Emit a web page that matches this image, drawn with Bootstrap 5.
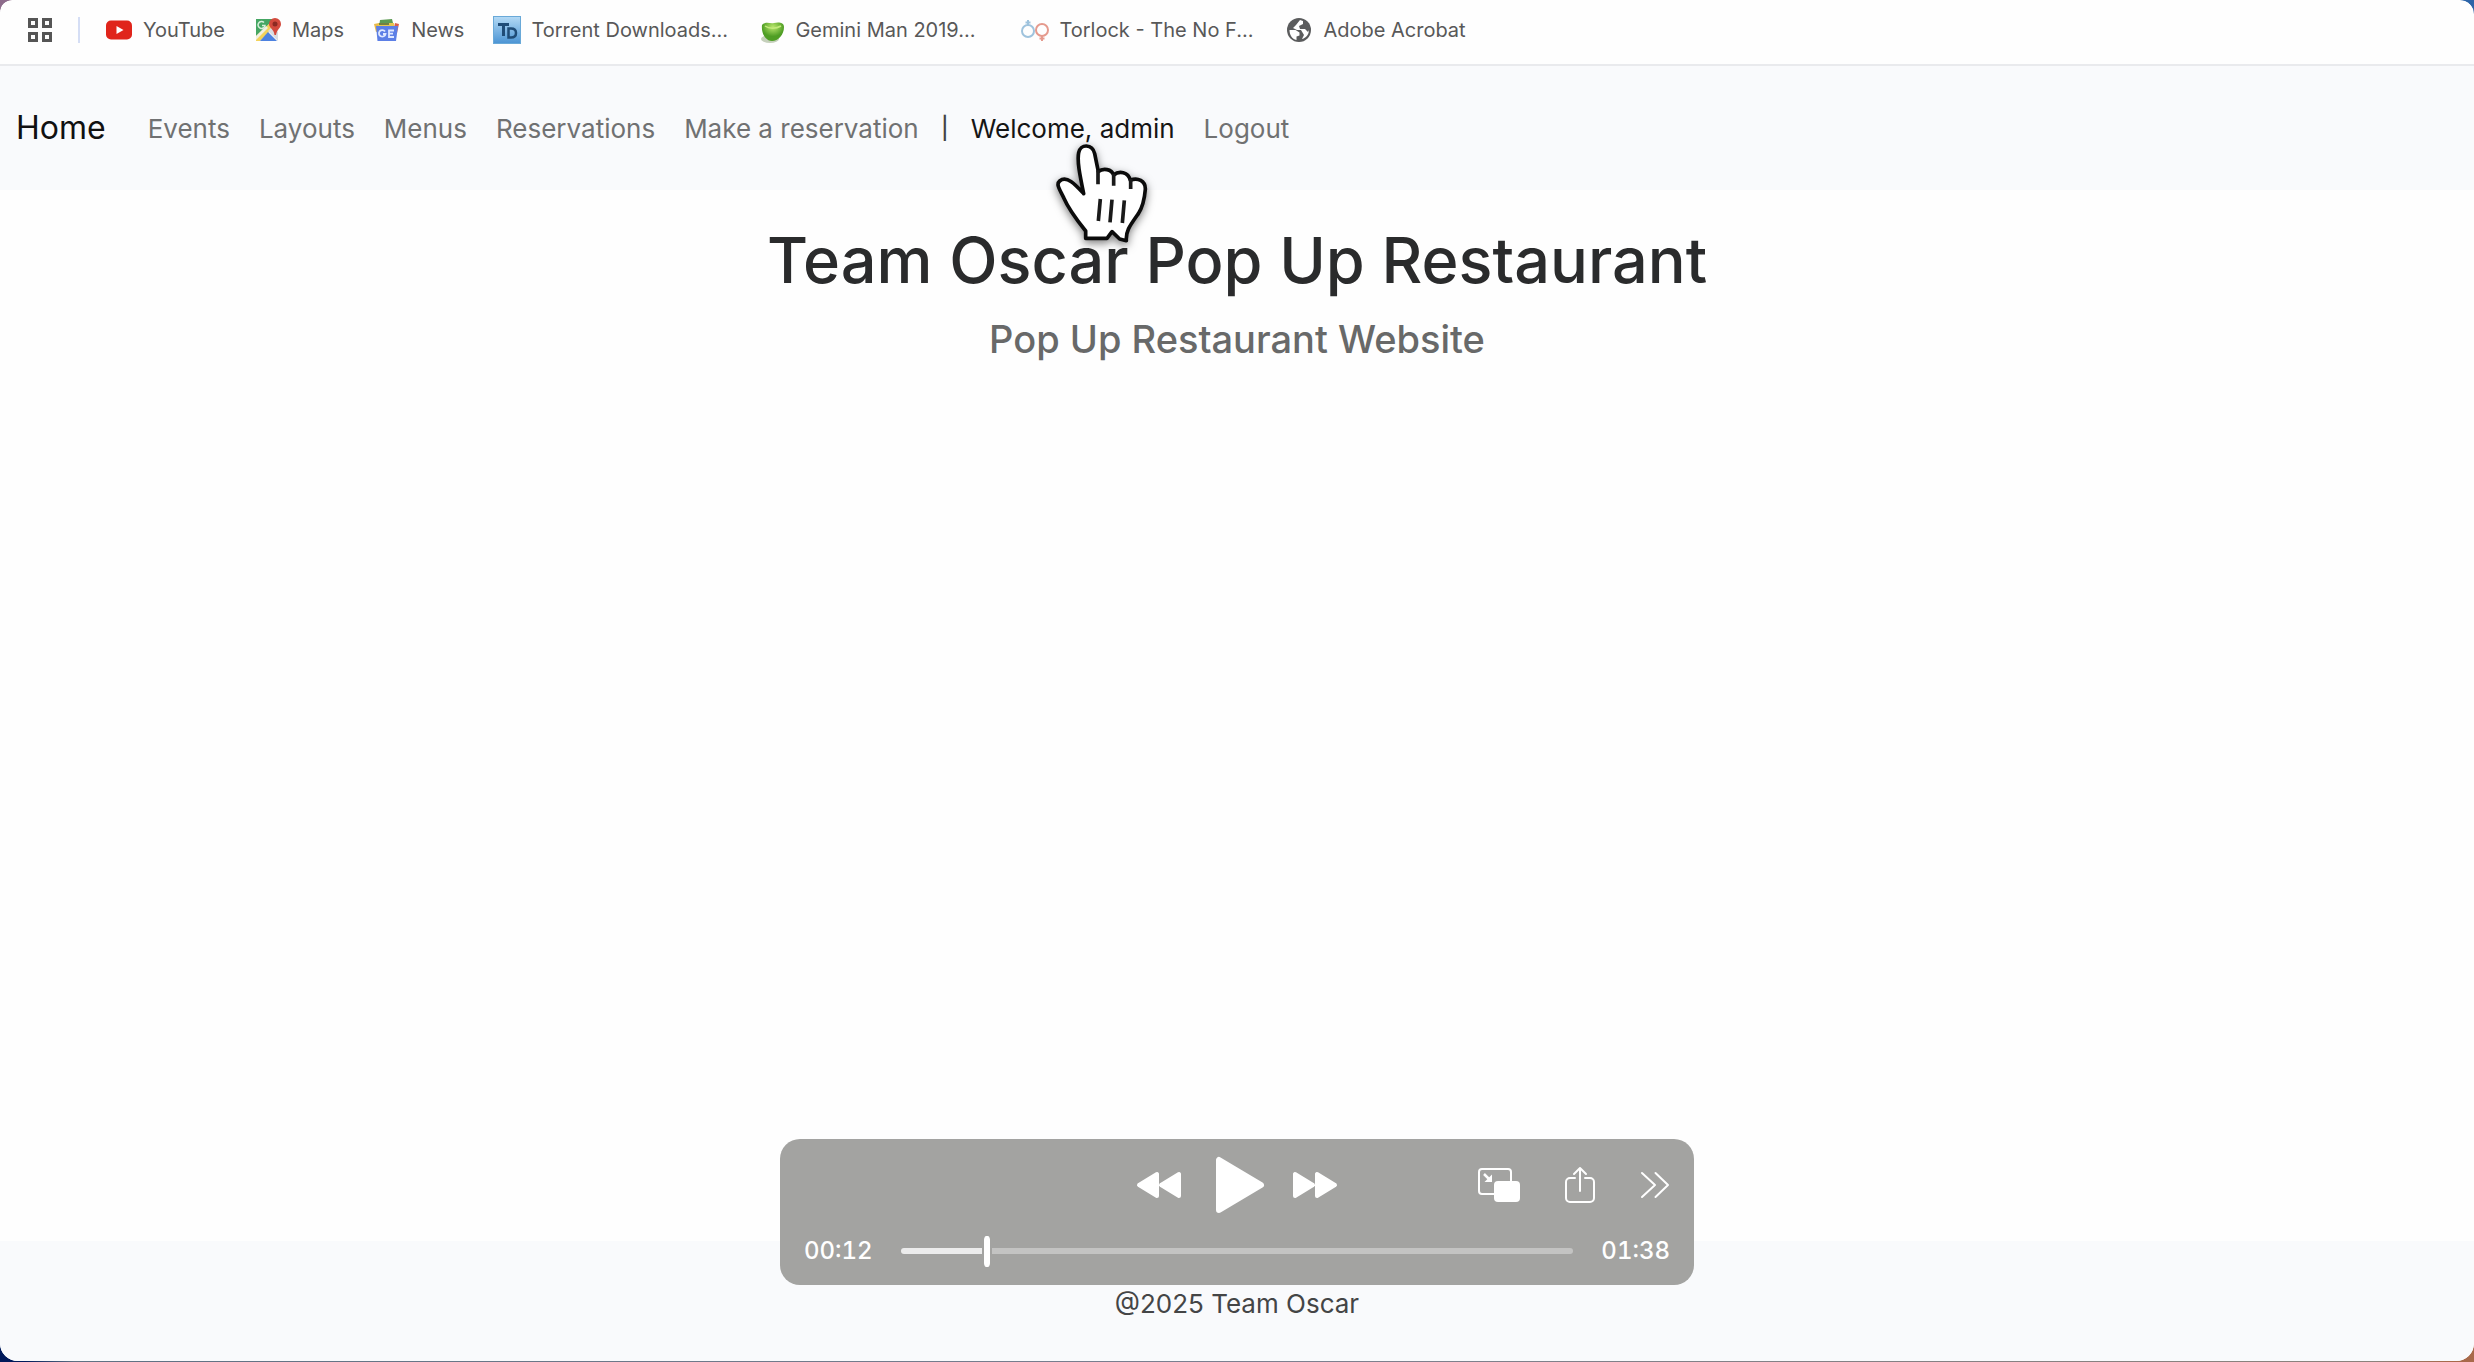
<!DOCTYPE html>
<html lang="en">
<head>
<meta charset="utf-8">
<meta name="viewport" content="width=device-width, initial-scale=1">
<title>Team Oscar Pop Up Restaurant</title>
<link href="https://cdn.jsdelivr.net/npm/bootstrap@5.3.0/dist/css/bootstrap.min.css" rel="stylesheet">
<script src="https://cdn.jsdelivr.net/npm/bootstrap@5.3.0/dist/js/bootstrap.bundle.min.js" defer></script>
<style>
  body {
    font-family: Inter, "Liberation Sans", sans-serif;
    font-size: 26px;
    background:
      linear-gradient(to right, #8d6b8b 50%, #2c64a8 50%) top / 100% 40px no-repeat,
      linear-gradient(to right, #00195a 1%, #5f7183 3%, #7b8090 50%, #8b827c 96%, #a8694a 99%);
  }
  .app-window { min-height: 100vh; border-bottom: 1px solid transparent; border-radius: 12px 14px 18px 18px; background: #fefefe padding-box; }
  .bookmarks { height: 66px; padding: 0 27px 5px; gap: 29px; font-size: 20px; border-bottom: 2px solid #e9eaed; }
  .bookmarks a { color: #585858; gap: 10px; }
  .bookmarks svg { width: 28px; height: 28px; flex: none; }
  .bookmarks .apps-button svg { width: 26px; height: 26px; }
  .bookmarks .divider { width: 2px; height: 26px; margin: 0 -4px; background: #d5def5; }
  .clipped { width: 197px; }
  .site-nav { height: 124px; padding: 0 16px; background: #f9fafc; }
  .site-nav .navbar-brand { font-size: 32px; margin-right: 28px; color: #111; }
  .site-nav .navbar-nav { gap: 1px; }
  .site-nav .navbar-nav .nav-link { padding: 8px 14px; color: #707172; }
  .site-nav .navbar-nav .nav-link.active { color: #151515; }
  .site-nav .pipe { width: 22px; font-size: 22px; font-weight: 500; color: #444; }
  .pointer { left: 96px; top: 40px; width: 100px; z-index: 5; filter: drop-shadow(0 3px 4px rgba(0, 0, 0, .5)); pointer-events: none; }
  .hero { padding-top: 33px; }
  .hero h1 { font-size: 63px; margin-bottom: 17px; color: #2a2b2c; }
  .hero .tagline { font-size: 38px; font-weight: 500; line-height: 46px; color: #686969; }
  .site-footer { height: 120px; padding-top: 4px; border-radius: 0 0 18px 18px; background: #f9fafc; color: #444546; }
  .player { width: 914px; height: 146px; bottom: 76px; padding: 17px 24px 0; border-radius: 20px; background: #a3a3a1; color: #fff; font-size: 24px; font-weight: 500; font-variant-numeric: tabular-nums; }
  .player button { padding: 0; border: 0; background: none; color: inherit; line-height: 0; }
  .player .controls { height: 58px; }
  .player .transport { gap: 30px; }
  .player .extras { gap: 45px; }
  .player .timeline { height: 74px; gap: 28px; }
  .seek { --played: 12%; -webkit-appearance: none; appearance: none; height: 32px; margin: 0; min-width: 0; background: none; }
  .seek::-webkit-slider-runnable-track { height: 6px; border-radius: 3px; background: linear-gradient(to right, #ececec var(--played), #c3c3c2 var(--played)); }
  .seek::-webkit-slider-thumb { -webkit-appearance: none; width: 10px; height: 31px; margin-top: -12px; border: 0 solid #a3a3a1; border-width: 0 2px; border-radius: 4px; background: #fff padding-box; box-shadow: none; }
</style>
</head>
<body>
<div class="app-window d-flex flex-column position-relative">
  <header>
    <div class="bookmarks d-flex align-items-center text-nowrap">
      <button class="apps-button btn p-0 border-0 d-flex" type="button" aria-label="Apps">
        <svg viewBox="0 0 26 26" fill="none" stroke="#555" stroke-width="3"><path d="M2.500 2.500h7v7h-7zM16.500 2.500h7v7h-7zM2.500 16.500h7v7h-7zM16.500 16.500h7v7h-7z"/></svg>
      </button>
      <span class="divider"></span>
      <a href="#" class="d-flex align-items-center text-decoration-none">
        <svg viewBox="0 0 28 28"><rect x="1" y="4.500" width="26" height="19" rx="5" fill="#e0251b"/><path d="M11.500 10v8l7-4z" fill="#fff"/></svg>
        <span>YouTube</span>
      </a>
      <a href="#" class="d-flex align-items-center text-decoration-none">
        <svg viewBox="0 0 28 28">
          <path d="M2 3h18L2 22z" fill="#45a663"/><path d="M2 25V20L17 6l4 4L6 25z" fill="#f3d35b"/><path d="M6 25l8-9 9 9z" fill="#4d82e0"/><path d="M14 15l5-5 5 6v9z" fill="#d9dde2"/>
          <path d="M2 20v4l12-12-2-2z" fill="#f0efe2"/><path d="M10 6.500a3.500 3.500 0 1 0 1 3H8" fill="none" stroke="#d8efdc" stroke-width="1.500"/>
          <path d="M21 2a6 6 0 0 1 6 6c0 4-4 5-5 11h-1.500C20 13 15 12 15 8a6 6 0 0 1 6-6z" fill="#d34a3d"/><circle cx="21" cy="8" r="2.500" fill="#8c2a22"/>
        </svg>
        <span>Maps</span>
      </a>
      <a href="#" class="d-flex align-items-center text-decoration-none">
        <svg viewBox="0 0 28 28">
          <path d="M7 4l12-1 2 8H6z" fill="#5d9b52"/><path d="M1 8l5-1 1 8-4 1z" fill="#e7b94a"/><path d="M22 7l4 1-2 9-4-1z" fill="#d9604c"/><path d="M5 7h16v5H5z" fill="#e8c750"/><path d="M6 8h10" stroke="#4c6b3a" stroke-width="1.500"/>
          <path d="M3 10h22l-2 15H4.500z" fill="#5c7fe6"/><path d="M12 15.500a3.300 3.300 0 1 0 .5 2.500H10M21 14.500h-5v6.500h5M16 17.700h4" fill="none" stroke="#dfe8ff" stroke-width="1.800"/>
        </svg>
        <span>News</span>
      </a>
      <a href="#" class="d-flex align-items-center text-decoration-none">
        <svg viewBox="0 0 28 28">
          <defs><linearGradient id="sky" x2="0" y2="1"><stop stop-color="#b4daf5"/><stop offset="1" stop-color="#4b94d4"/></linearGradient></defs>
          <rect x=".5" y=".5" width="27" height="27" fill="url(#sky)" stroke="#69a9d8"/>
          <path d="M5 8.500h11M10.500 8v12" fill="none" stroke="#1f4c77" stroke-width="3"/><path d="M15.500 12.500h2.500c4 0 5 2 5 4.500s-1 4.500-5 4.500h-2.500z" fill="none" stroke="#1f4c77" stroke-width="2.500"/>
        </svg>
        <span class="clipped">Torrent Downloads...</span>
      </a>
      <a href="#" class="d-flex align-items-center text-decoration-none">
        <svg viewBox="0 0 28 28">
          <defs><radialGradient id="leaf" cx=".5" cy=".25"><stop stop-color="#b9e66c"/><stop offset="1" stop-color="#4f9e24"/></radialGradient></defs>
          <ellipse cx="13" cy="23" rx="9" ry="4" fill="#c5d0bb"/><path d="M5 9c4-4 8-1 12-2s10-1 10 4c0 8-6 14-12 14S4 18 5 9z" fill="url(#leaf)"/><path d="M8 10c4 3 11 3 16 0" fill="none" stroke="#c3ea7c" stroke-width="1.500"/>
        </svg>
        <span class="clipped">Gemini Man 2019...</span>
      </a>
      <a href="#" class="d-flex align-items-center text-decoration-none">
        <svg viewBox="0 0 28 28" fill="none" stroke-width="2"><g stroke="#9fc3dd"><circle cx="7" cy="15" r="6"/><path d="M7 9V4M4.500 6.500h5"/></g><g stroke="#e59a8d"><circle cx="21" cy="14" r="6"/><path d="M21 20v5M18.500 22.500h5"/></g></svg>
        <span class="clipped">Torlock - The No F...</span>
      </a>
      <a href="#" class="d-flex align-items-center text-decoration-none">
        <svg viewBox="0 0 28 28"><circle cx="14" cy="14" r="12" fill="#5b5c5d"/><path d="M4.500 14h6l4 2.500v3l-3 1v3.500C7 23 4.500 19 4.500 14zM11 9l4-5 3 1v3l-4 2 1 3h5l3 3 1-2c0 5-4 8.500-7 9l2-4-3-5h-4l-4-2z" fill="#fff"/></svg>
        <span>Adobe Acrobat</span>
      </a>
    </div>
    <nav class="site-nav navbar navbar-expand flex-nowrap justify-content-start">
      <a class="navbar-brand" href="#">Home</a>
      <ul class="navbar-nav align-items-center text-nowrap">
        <li class="nav-item"><a class="nav-link" href="#">Events</a></li>
        <li class="nav-item"><a class="nav-link" href="#">Layouts</a></li>
        <li class="nav-item"><a class="nav-link" href="#">Menus</a></li>
        <li class="nav-item"><a class="nav-link" href="#">Reservations</a></li>
        <li class="nav-item"><a class="nav-link" href="#">Make a reservation</a></li>
        <li class="pipe text-center">|</li>
        <li class="nav-item position-relative">
          <a class="nav-link active" href="#">Welcome, admin</a>
          <svg class="pointer position-absolute" viewBox="220 420 300 320" aria-hidden="true">
            <path d="M312 578C300 520 292 480 297 455C302 428 338 428 345 458L356 512C370 500 396 504 402 522C418 508 446 512 452 538C474 528 498 540 497 565C494 600 488 620 476 638C450 675 438 690 440 719L420 714L397 692L382 712L318 712L318 690C290 655 265 620 252 590C240 565 228 550 240 540C262 522 288 552 312 578Z" fill="#fff" stroke="#0b0b0b" stroke-width="11" stroke-linejoin="round"/>
            <path d="M355 508v42M402 518v36M453 534v30M362 594l-6 66M397 596l-6 68M434 598l-6 68" fill="none" stroke="#1a1a1a" stroke-width="11"/>
          </svg>
        </li>
        <li class="nav-item"><a class="nav-link" href="#">Logout</a></li>
      </ul>
    </nav>
  </header>

  <main class="hero flex-grow-1 text-center">
    <h1>Team Oscar Pop Up Restaurant</h1>
    <p class="tagline mb-0">Pop Up Restaurant Website</p>
  </main>

  <footer class="site-footer d-flex align-items-center justify-content-center">@2025 Team Oscar</footer>

  <section class="player position-absolute start-50 translate-middle-x" aria-label="Video player">
    <div class="controls d-flex align-items-center justify-content-end position-relative">
      <div class="transport d-flex align-items-center position-absolute start-50 translate-middle-x">
        <button type="button" aria-label="Rewind"><svg width="46" height="28" viewBox="0 0 46 28" fill="#fff" stroke="#fff" stroke-width="4" stroke-linejoin="round"><path d="M21 3v22L3 14zM43 3v22L25 14z"/></svg></button>
        <button type="button" aria-label="Play"><svg class="overflow-visible" width="50" height="56" viewBox="-3 0 50 56" fill="#fff" stroke="#fff" stroke-width="6" stroke-linejoin="round"><path d="M4 3v50l42-25z"/></svg></button>
        <button type="button" aria-label="Fast forward"><svg width="46" height="28" viewBox="0 0 46 28" fill="#fff" stroke="#fff" stroke-width="4" stroke-linejoin="round"><path d="M3 3v22l18-11zM25 3v22l18-11z"/></svg></button>
      </div>
      <div class="extras d-flex align-items-center">
        <button type="button" aria-label="Picture in picture">
          <svg width="42" height="38" viewBox="0 0 42 38" fill="none" stroke="#fff" stroke-width="2"><path d="M16 28H4a3 3 0 0 1-3-3V6a3 3 0 0 1 3-3h26a3 3 0 0 1 3 3v9"/><path d="M6 8l6 6" stroke-width="2.500"/><path d="M14 8.500V16H6.500z" fill="#fff" stroke="none"/><rect x="16" y="15" width="26" height="21" rx="4" fill="#fff" stroke="none"/></svg>
        </button>
        <button type="button" aria-label="Share">
          <svg width="30" height="38" viewBox="0 0 30 38" fill="none" stroke="#fff" stroke-width="2" stroke-linecap="round" stroke-linejoin="round"><path d="M10 12H5a4 4 0 0 0-4 4v16a4 4 0 0 0 4 4h20a4 4 0 0 0 4-4V16a4 4 0 0 0-4-4h-5M15 25V2M9 8l6-6 6 6"/></svg>
        </button>
        <button type="button" aria-label="More">
          <svg width="30" height="28" viewBox="0 0 30 28" fill="none" stroke="#fff" stroke-width="2" stroke-linecap="round" stroke-linejoin="round"><path d="M2 2l13 12L2 26M15.500 2L28 14 15.500 26"/></svg>
        </button>
      </div>
    </div>
    <div class="timeline d-flex align-items-center">
      <label for="seek">00:12</label>
      <input class="seek flex-grow-1" id="seek" type="range" min="0" max="98" value="12">
      <span>01:38</span>
    </div>
  </section>
</div>
</body>
</html>
